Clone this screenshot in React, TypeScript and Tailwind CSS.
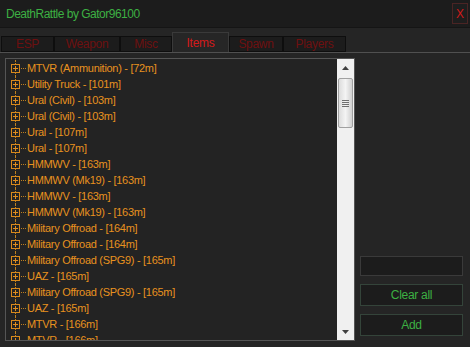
import React from 'react';

const items = [
  'MTVR (Ammunition) - [72m]',
  'Utility Truck - [101m]',
  'Ural (Civil) - [103m]',
  'Ural (Civil) - [103m]',
  'Ural - [107m]',
  'Ural - [107m]',
  'HMMWV - [163m]',
  'HMMWV (Mk19) - [163m]',
  'HMMWV - [163m]',
  'HMMWV (Mk19) - [163m]',
  'Military Offroad - [164m]',
  'Military Offroad - [164m]',
  'Military Offroad (SPG9) - [165m]',
  'UAZ - [165m]',
  'Military Offroad (SPG9) - [165m]',
  'UAZ - [165m]',
  'MTVR - [166m]',
  'MTVR - [166m]',
];

const tabs = [
  { label: 'ESP', w: 'w-[53px]' },
  { label: 'Weapon', w: 'w-[66px]' },
  { label: 'Misc', w: 'w-[52px]' },
  { label: 'Items', w: 'w-[57px]', active: true },
  { label: 'Spawn', w: 'w-[54px]' },
  { label: 'Players', w: 'w-[63px]' },
];

const TreeRow: React.FC<{ text: string }> = ({ text }) => (
  <div className="relative flex h-[16px] items-center">
    {/* vertical dotted connector */}
    <div className="absolute left-[9px] top-0 h-full border-l border-dotted border-[#c0801e]" />
    <div className="relative z-10 ml-[5px] flex h-[9px] w-[9px] items-center justify-center border border-[#d8891c] bg-[#232323]">
      <svg width="7" height="7" viewBox="0 0 7 7">
        <path d="M1 3.5h5M3.5 1v5" stroke="#e08e1f" strokeWidth="1" />
      </svg>
    </div>
    <div className="mx-[1px] w-[5px] border-t border-dotted border-[#c0801e]" />
    <span className="whitespace-nowrap text-[11px] leading-none tracking-[-0.3px] text-[#e8921f]">{text}</span>
  </div>
);

const Scrollbar: React.FC = () => (
  <div className="flex w-[17px] flex-col bg-[#f0f0f0]">
    <div className="flex h-[17px] items-center justify-center">
      <svg width="7" height="4" viewBox="0 0 7 4">
        <path d="M0 4L3.5 0L7 4Z" fill="#404040" />
      </svg>
    </div>
    <div className="mx-[1px] mt-[2px] flex h-[50px] items-center justify-center rounded-[2px] border border-[#a0a0a0] bg-gradient-to-r from-[#dcdcdc] via-[#f4f4f4] to-[#d0d0d0]">
      <div className="flex flex-col gap-[1px]">
        <div className="h-[1px] w-[7px] bg-[#707070]" />
        <div className="h-[1px] w-[7px] bg-[#707070]" />
        <div className="h-[1px] w-[7px] bg-[#707070]" />
        <div className="h-[1px] w-[7px] bg-[#707070]" />
      </div>
    </div>
    <div className="flex-1" />
    <div className="flex h-[17px] items-center justify-center">
      <svg width="7" height="4" viewBox="0 0 7 4">
        <path d="M0 0L3.5 4L7 0Z" fill="#404040" />
      </svg>
    </div>
  </div>
);

const App: React.FC = () => {
  return (
    <div className="flex h-[347px] w-[470px] flex-col overflow-hidden bg-[#252525] font-['Liberation_Sans',Arial,sans-serif]">
      {/* Title bar */}
      <div className="flex h-[28px] items-center justify-between border-b border-[#151515] bg-[#1c1c1c] pl-[6px] pr-[2px]">
        <span className="text-[12px] tracking-[-0.5px] text-[#3cb043]">DeathRattle by Gator96100</span>
        <div className="flex h-[21px] w-[16px] items-center justify-center border border-[#4a2424] bg-[#1e1e1e] text-[12px] text-[#d01a1a]">
          X
        </div>
      </div>

      {/* Tabs */}
      <div className="flex h-[24px] items-end pl-[1px]">
        {tabs.map((t) =>
          t.active ? (
            <div
              key={t.label}
              className={`${t.w} flex h-[20px] items-center justify-center border border-b-0 border-[#3a3a3a] bg-[#262626] text-[12px] tracking-[-0.3px] text-[#d41a1a]`}
            >
              {t.label}
            </div>
          ) : (
            <div
              key={t.label}
              className={`${t.w} flex h-[16px] items-center justify-center border border-[#0e0e0e] bg-[#1c1c1c] text-[12px] tracking-[-0.3px] text-[#6e1010]`}
            >
              {t.label}
            </div>
          )
        )}
      </div>

      {/* Panel */}
      <div className="flex flex-1 gap-[5px] border-t border-[#505050] pl-[5px] pr-[7px] pt-[5px]">
        <div className="flex h-[283px] w-[350px] border border-[#555] bg-[#232323]">
          <div className="flex-1 overflow-hidden pt-[1px]">
            {items.map((it, i) => (
              <TreeRow key={i} text={it} />
            ))}
          </div>
          <Scrollbar />
        </div>

        <div className="flex flex-1 flex-col justify-end gap-[8px] pb-[11px]">
          <div className="h-[20px] border border-[#3a3a3a] bg-[#1c1c1c]" />
          <div className="flex h-[22px] items-center justify-center border border-[#34443a] bg-[#1c1c1c] text-[12px] tracking-[-0.3px] text-[#3cb043]">
            Clear all
          </div>
          <div className="flex h-[22px] items-center justify-center border border-[#34443a] bg-[#1c1c1c] text-[12px] tracking-[-0.3px] text-[#3cb043]">
            Add
          </div>
        </div>
      </div>
    </div>
  );
};

export default App;
